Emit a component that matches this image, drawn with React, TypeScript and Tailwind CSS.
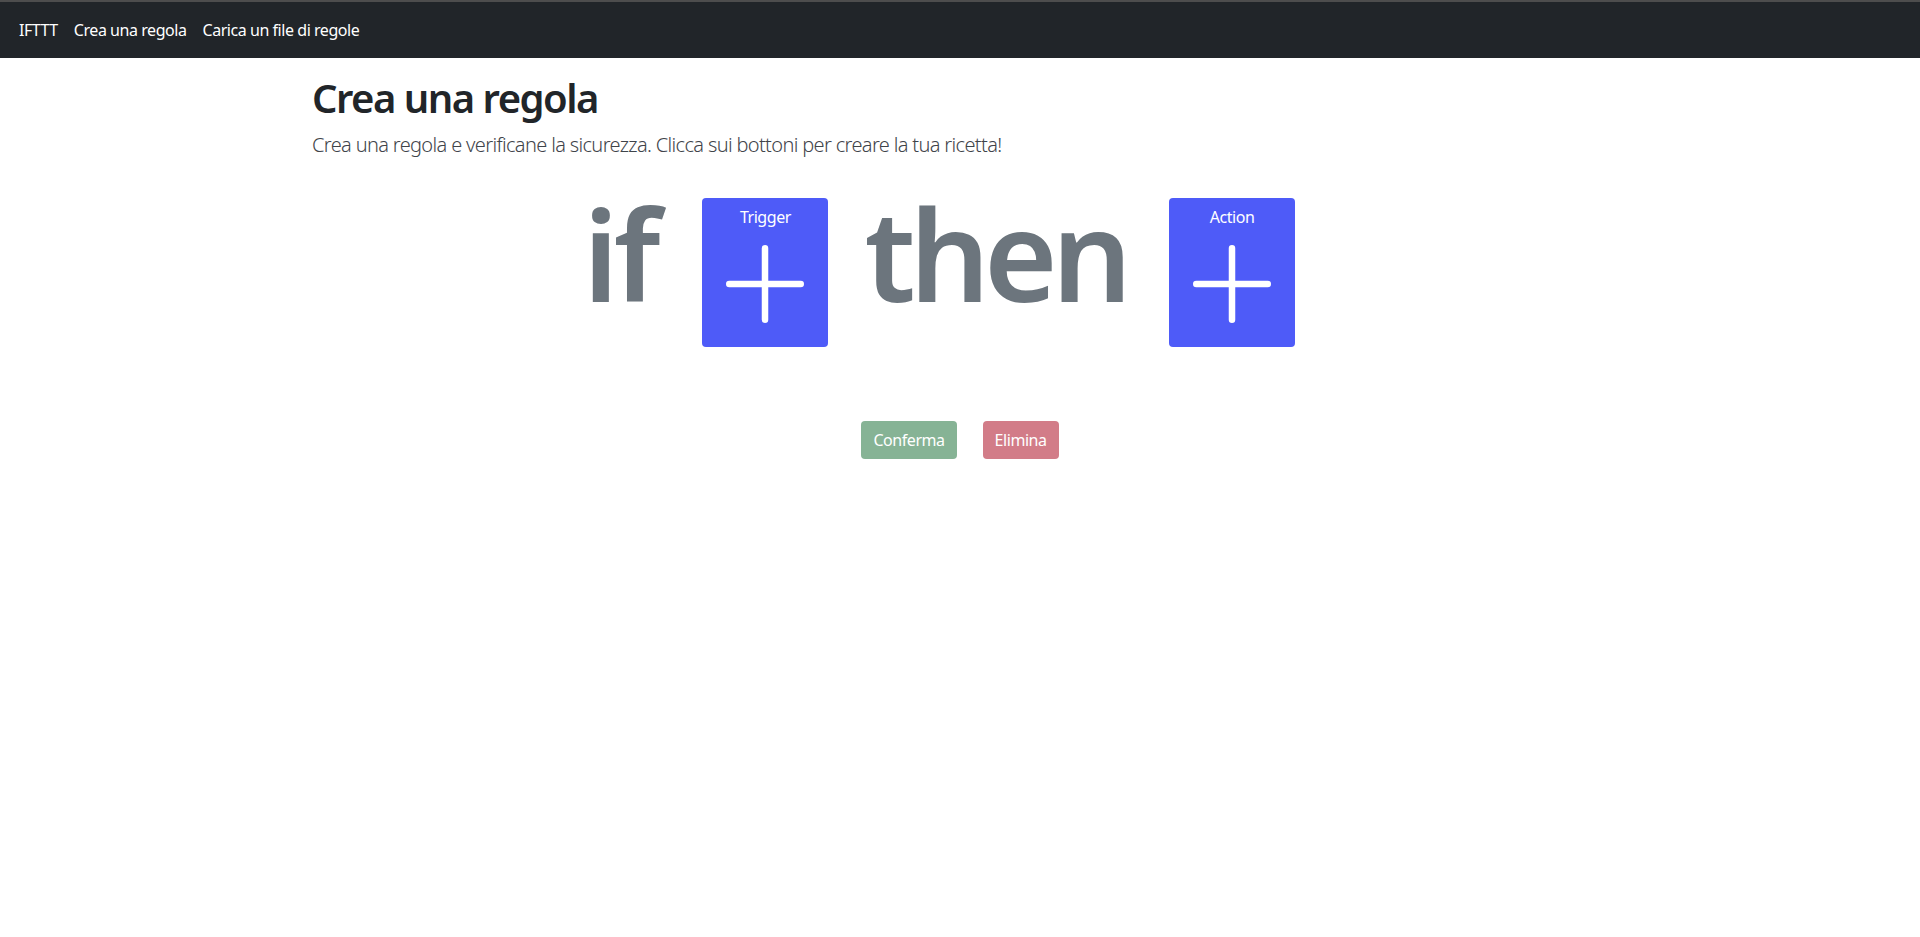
import React from "react";

const FONT = { fontFamily: '"Noto Sans", "Open Sans", sans-serif' };

function PlusIcon() {
  return (
    <svg width="104" height="104" viewBox="0 0 16 16" fill="none">
      <path d="M8 2.5v11M2.5 8h11" stroke="#fff" strokeWidth="1" strokeLinecap="round" />
    </svg>
  );
}

function AddBox({ label }: { label: string }) {
  return (
    <button
      type="button"
      className="flex h-[149px] w-[126px] shrink-0 flex-col items-center rounded-[4px] bg-[#4e5bf8] pt-[7px] text-white"
    >
      <span className="text-[16px] leading-6 tracking-[-0.45px]">{label}</span>
      <span className="mt-[3px]">
        <PlusIcon />
      </span>
    </button>
  );
}

export default function App() {
  return (
    <div className="min-h-screen bg-white text-[#212529]" style={FONT}>
      <nav className="flex h-[58px] items-center gap-[16px] border-t-2 border-[#4d4d4d] bg-[#212529] pl-[19px] text-[16px] tracking-[-0.45px] text-white">
        <a href="#">IFTTT</a>
        <a href="#">Crea una regola</a>
        <a href="#">Carica un file di regole</a>
      </nav>

      <main className="mx-auto w-[1320px] px-3 pt-[16px]">
        <h1 className="mb-2 text-[40px] font-semibold leading-[48px] tracking-[-1.5px]">Crea una regola</h1>
        <p className="mb-4 text-[20px] font-light leading-[30px] tracking-[-0.65px] text-[#3f444a]">
          Crea una regola e verificane la sicurezza. Clicca sui bottoni per creare la tua ricetta!
        </p>

        <div className="flex items-start justify-center pr-[42px] pt-[22px]">
          <span className="mr-[47px] mt-[-25px] text-[126px] font-semibold leading-[160px] tracking-[-5px] text-[#6c757d]">
            if
          </span>
          <AddBox label="Trigger" />
          <span className="ml-[36px] mr-[43px] mt-[-25px] text-[126px] font-semibold leading-[160px] tracking-[-6px] text-[#6c757d]">
            then
          </span>
          <AddBox label="Action" />
        </div>

        <div className="mt-[74px] flex justify-center gap-[26px]">
          <button
            type="button"
            className="h-[38px] rounded-[4px] bg-[#86b395] px-3 text-[16px] tracking-[-0.45px] text-white"
          >
            Conferma
          </button>
          <button
            type="button"
            className="h-[38px] rounded-[4px] bg-[#d27c88] px-3 text-[16px] tracking-[-0.45px] text-white"
          >
            Elimina
          </button>
        </div>
      </main>
    </div>
  );
}
